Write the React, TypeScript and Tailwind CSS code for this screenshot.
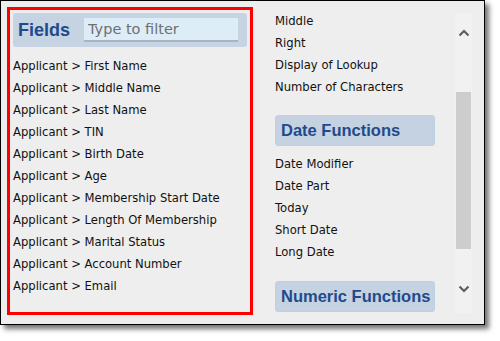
const fields = [
  "First Name",
  "Middle Name",
  "Last Name",
  "TIN",
  "Birth Date",
  "Age",
  "Membership Start Date",
  "Length Of Membership",
  "Marital Status",
  "Account Number",
  "Email",
];

const textFuncs = ["Middle", "Right", "Display of Lookup", "Number of Characters"];
const dateFuncs = ["Date Modifier", "Date Part", "Today", "Short Date", "Long Date"];

const font = { fontFamily: '"DejaVu Sans", Verdana, sans-serif' };
const headFont = { fontFamily: '"Liberation Sans", Arial, sans-serif' };

function GroupHeader({ title, className = "" }: { title: string; className?: string }) {
  return (
    <div
      className={`flex h-[31px] w-[160px] items-center whitespace-nowrap rounded-[3px] border border-[#bcd0e6] bg-[#c5d2e1] pl-[5px] text-[16.5px] font-bold text-[#1f4a8c] ${className}`}
      style={headFont}
    >
      {title}
    </div>
  );
}

function Item({ label }: { label: string }) {
  return <div className="flex h-[22px] items-center whitespace-nowrap text-[11.6px] text-[#111]">{label}</div>;
}

export default function App() {
  return (
    <div className="h-[341px] w-[500px] bg-white" style={font}>
      <div className="flex h-[325px] w-[485px] border border-black bg-[#eeeeee] shadow-[4px_4px_5px_rgba(0,0,0,0.55)]">
        {/* Fields panel */}
        <div className="ml-[6px] mt-[6px] flex h-[308px] w-[246px] shrink-0 flex-col border-[3px] border-[#ff0000] px-[3px] pt-[3px]">
          <div className="flex h-[34px] items-center rounded-[3px] bg-[#c5d3e2] pl-[5px] pr-[5px]">
            <span className="w-[66px] text-[18px] font-bold text-[#1f4a8c]" style={headFont}>
              Fields
            </span>
            <input
              placeholder="Type to filter"
              className="h-[24px] w-[154px] min-w-0 border-b-2 border-[#a9b4bf] bg-[#dcedf8] px-[4px] text-[14.5px] text-[#333] outline-none placeholder:text-[#6f6f6f]"
              style={font}
            />
          </div>
          <div className="mt-[9px] flex flex-col">
            {fields.map((f) => (
              <Item key={f} label={`Applicant > ${f}`} />
            ))}
          </div>
        </div>

        {/* Functions list */}
        <div className="ml-[22px] flex flex-col pt-[10px]">
          {textFuncs.map((f) => (
            <Item key={f} label={f} />
          ))}
          <GroupHeader title="Date Functions" className="mt-[16px]" />
          <div className="mt-[8px] flex flex-col">
            {dateFuncs.map((f) => (
              <Item key={f} label={f} />
            ))}
          </div>
          <GroupHeader title="Numeric Functions" className="mt-[17px]" />
        </div>

        {/* Scrollbar */}
        <div className="ml-auto mr-[12px] mt-[12px] flex h-[300px] w-[17px] shrink-0 flex-col items-center bg-[#f1f1f1]">
          <svg width="12" height="8" viewBox="0 0 12 8" className="mt-[16px]">
            <path d="M1.5 6.5 L6 2 L10.5 6.5" fill="none" stroke="#5f5f5f" strokeWidth="2.2" />
          </svg>
          <div className="mt-[55px] h-[157px] w-[15px] bg-[#cdcdcd]" />
          <svg width="12" height="8" viewBox="0 0 12 8" className="mt-[36px]">
            <path d="M1.5 1.5 L6 6 L10.5 1.5" fill="none" stroke="#5f5f5f" strokeWidth="2.2" />
          </svg>
        </div>
      </div>
    </div>
  );
}
